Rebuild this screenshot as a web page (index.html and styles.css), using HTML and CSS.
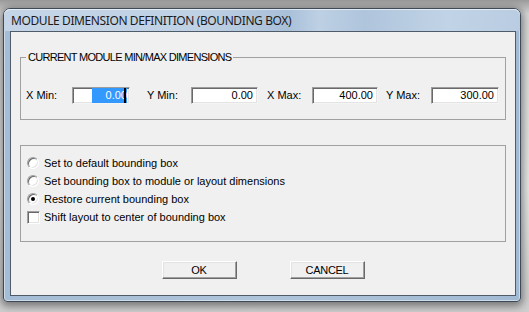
FILE: index.html
```html
<!DOCTYPE html>
<html>
<head>
<meta charset="utf-8">
<link rel="stylesheet" href="styles.css">
</head>
<body>
<div class="window">
  <div class="titlebar"><span class="title">MODULE DIMENSION DEFINITION (BOUNDING BOX)</span></div>
  <div class="client">
    <div class="group g1">
      <div class="legend">CURRENT MODULE MIN/MAX DIMENSIONS</div>
      <div class="row">
        <span class="lbl l1">X Min:</span>
        <span class="field w58"><span class="sel">0.00</span><span class="caret"></span></span>
        <span class="lbl l2">Y Min:</span>
        <span class="field w67">0.00</span>
        <span class="lbl l3">X Max:</span>
        <span class="field w66">400.00</span>
        <span class="lbl l4">Y Max:</span>
        <span class="field w68">300.00</span>
      </div>
    </div>
    <div class="group g2">
      <div class="opt"><span class="radio"></span><span class="otext">Set to default bounding box</span></div>
      <div class="opt"><span class="radio"></span><span class="otext">Set bounding box to module or layout dimensions</span></div>
      <div class="opt"><span class="radio on"></span><span class="otext">Restore current bounding box</span></div>
      <div class="opt"><span class="check"></span><span class="otext">Shift layout to center of bounding box</span></div>
    </div>
    <div class="buttons">
      <span class="btn">OK</span>
      <span class="btn">CANCEL</span>
    </div>
  </div>
</div>
</body>
</html>
```

FILE: styles.css
```css
html, body {
  margin: 0;
  padding: 0;
}
body {
  width: 529px;
  height: 312px;
  overflow: hidden;
  background: linear-gradient(180deg, #9a9a9a 0px, #d8d8d8 14px, #e8e8e8 60%, #cfcfcf 100%);
  padding: 8px 0 0 3px;
  box-sizing: border-box;
  font-family: "Liberation Sans", Arial, sans-serif;
  font-size: 11px;
  color: #000;
}
.window {
  width: 518px;
  height: 294px;
  box-sizing: border-box;
  border: 1px solid #3e4a58;
  border-radius: 7px 7px 4px 4px;
  padding: 0 4px 5px 6px;
  background: linear-gradient(90deg, #a4bcd5 0%, #aec4db 50%, #a2bad4 100%);
  box-shadow: 0 2px 8px 2px rgba(0,0,0,0.45), inset 0 0 0 1px rgba(255,255,255,0.45);
}
.titlebar {
  height: 22px;
  margin: 0 -4px 0 -6px;
  padding-left: 7px;
  border-radius: 6px 6px 0 0;
  background: linear-gradient(90deg, #c4d5e7 0%, #bfd1e4 38%, #a9c0d9 55%, #bdd0e4 61%, #afc5dc 70%, #c1d3e6 86%, #b9cce1 100%);
  box-shadow: inset 0 1px 0 rgba(255,255,255,0.6);
  display: flex;
  align-items: center;
}
.title {
  font-family: "Noto Sans", "Open Sans", sans-serif;
  font-size: 12px;
  letter-spacing: -0.4px;
  line-height: 22px;
  color: #1b1b1b;
  padding-top: 2px;
}
.client {
  height: 265px;
  box-sizing: border-box;
  border: 1px solid #4f5b69;
  background: #f0f0f0;
  display: flex;
  flex-direction: column;
}
.group {
  border: 1px solid #a0a0a0;
  margin: 0 9px;
}
.g1 {
  margin-top: 25px;
  padding: 0 0 15px 5px;
}
.legend {
  width: fit-content;
  margin: -7px 0 0 0;
  padding: 0 2px;
  line-height: 13px;
  height: 13px;
  letter-spacing: -0.7px;
  background: #f0f0f0;
}
.row {
  margin-top: 23px;
  display: flex;
  align-items: center;
  height: 17px;
}
.lbl {
  line-height: 17px;
  box-sizing: border-box;
}
.l1 { width: 46px; }
.l2 { width: 61px; padding-left: 17px; }
.l3 { width: 54px; padding-left: 9px; }
.l4 { width: 53px; padding-left: 8px; }
.field {
  height: 17px;
  box-sizing: border-box;
  background: #fff;
  border: 1px solid;
  border-color: #9d9d9d #f4f4f4 #f4f4f4 #9d9d9d;
  box-shadow: inset 1px 1px 0 #696969, inset -1px -1px 0 #e3e3e3;
  display: flex;
  justify-content: flex-end;
  align-items: center;
  padding-right: 4px;
  line-height: 15px;
}
.w58 { width: 58px; padding-right: 3px; }
.w67 { width: 67px; }
.w66 { width: 66px; }
.w68 { width: 68px; }
.sel {
  background: #3399ff;
  color: #fff;
  height: 15px;
  line-height: 15px;
  padding-left: 14px;
}
.caret {
  width: 2px;
  height: 15px;
  background: #000;
  margin-left: -3px;
}
.g2 {
  margin-top: 25px;
  padding: 8px 0 15px 6px;
}
.opt {
  height: 18px;
  display: flex;
  align-items: center;
}
.radio {
  width: 12px;
  height: 12px;
  box-sizing: border-box;
  border-radius: 50%;
  border: 1px solid;
  border-color: #a0a0a0 #ffffff #ffffff #a0a0a0;
  box-shadow: inset 1px 1px 0 #696969, inset -1px -1px 0 #e3e3e3;
  background: #fff;
  margin-right: 5px;
  display: flex;
  align-items: center;
  justify-content: center;
}
.radio.on::after {
  content: "";
  width: 4px;
  height: 4px;
  border-radius: 50%;
  background: #000;
}
.check {
  width: 13px;
  height: 13px;
  box-sizing: border-box;
  border: 1px solid;
  border-color: #a0a0a0 #ffffff #ffffff #a0a0a0;
  box-shadow: inset 1px 1px 0 #696969, inset -1px -1px 0 #e3e3e3;
  background: #fff;
  margin-right: 4px;
}
.otext {
  line-height: 18px;
}
.buttons {
  margin-top: 19px;
  display: flex;
  justify-content: center;
  gap: 53px;
}
.btn {
  width: 75px;
  height: 18px;
  box-sizing: border-box;
  border: 1px solid;
  border-color: #ffffff #696969 #696969 #ffffff;
  box-shadow: inset -1px -1px 0 #a0a0a0, inset 1px 1px 0 #e3e3e3;
  background: #f0f0f0;
  display: flex;
  align-items: center;
  justify-content: center;
  line-height: 16px;
  letter-spacing: -0.3px;
}
```
